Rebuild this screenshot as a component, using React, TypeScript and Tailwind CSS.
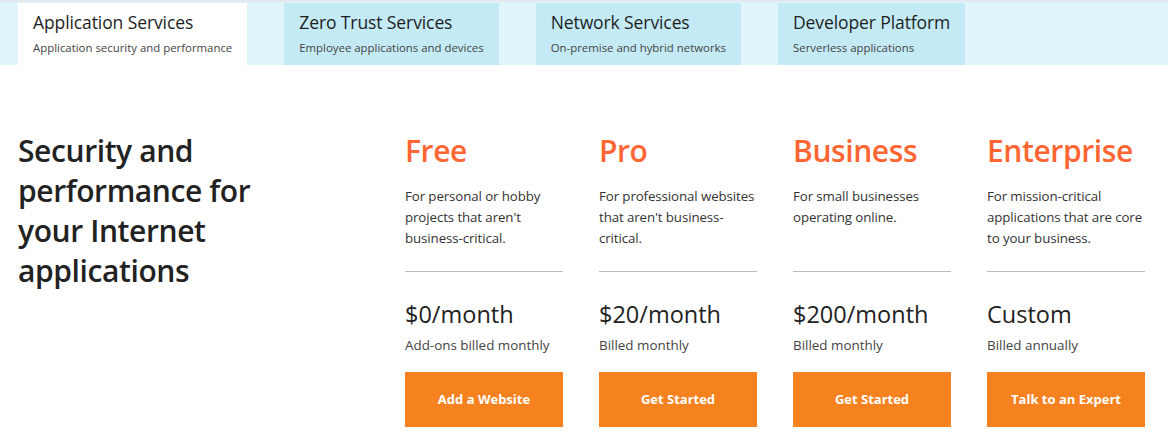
import React from 'react';

const TABS = [
  { title: 'Application Services', sub: 'Application security and performance', active: true },
  { title: 'Zero Trust Services', sub: 'Employee applications and devices' },
  { title: 'Network Services', sub: 'On-premise and hybrid networks' },
  { title: 'Developer Platform', sub: 'Serverless applications' },
];

const PLANS = [
  { name: 'Free', desc: "For personal or hobby projects that aren't business-critical.", price: '$0/month', billing: 'Add-ons billed monthly', cta: 'Add a Website' },
  { name: 'Pro', desc: "For professional websites that aren't business-critical.", price: '$20/month', billing: 'Billed monthly', cta: 'Get Started' },
  { name: 'Business', desc: 'For small businesses operating online.', price: '$200/month', billing: 'Billed monthly', cta: 'Get Started' },
  { name: 'Enterprise', desc: 'For mission-critical applications that are core to your business.', price: 'Custom', billing: 'Billed annually', cta: 'Talk to an Expert' },
];

export default function App() {
  return (
    <div className="w-[1168px] h-[439px] overflow-hidden bg-white text-[#222] font-['Open_Sans',sans-serif]">
      {/* product tabs */}
      <div className="h-[65px] bg-[#e0f4fb] border-t-2 border-[#e2e8ee] flex items-end gap-[37px] px-[18px]">
        {TABS.map((t) => (
          <div
            key={t.title}
            className={`h-[62px] px-[15px] pt-[7px] ${t.active ? 'bg-white' : 'bg-[#c4eaf5]'}`}
          >
            <div className="text-[17.5px] leading-[24px] tracking-[-0.1px] text-[#1e1e1e]">{t.title}</div>
            <div className="text-[11.4px] leading-[16px] mt-[6px] text-[#444]">{t.sub}</div>
          </div>
        ))}
      </div>

      {/* plans */}
      <div className="flex px-[18px] pt-[66px]">
        <div className="w-[387px] shrink-0">
          <h1 className="w-[260px] text-[30px] leading-[40px] font-semibold tracking-[-0.4px] text-[#222]">
            Security and performance for your Internet applications
          </h1>
        </div>
        <div className="flex gap-[36px]">
          {PLANS.map((p) => (
            <div key={p.name} className="w-[158px]">
              <h2 className="text-[30px] leading-[40px] text-[#ff6633] font-semibold tracking-[-0.4px] whitespace-nowrap">{p.name}</h2>
              <p className="mt-[15px] h-[63px] text-[13.3px] leading-[21px] tracking-[-0.1px] text-[#333]">{p.desc}</p>
              <div className="mt-[22px] h-px bg-[#bbbbbb]" />
              <div className="mt-[26px] text-[23.5px] leading-[32px] font-medium text-[#222] whitespace-nowrap">{p.price}</div>
              <div className="mt-[5px] text-[13.4px] leading-[21px] text-[#444] whitespace-nowrap">{p.billing}</div>
              <button className="mt-[16px] w-full h-[55px] bg-[#f6821f] text-white text-[13px] font-bold">
                {p.cta}
              </button>
            </div>
          ))}
        </div>
      </div>
    </div>
  );
}
